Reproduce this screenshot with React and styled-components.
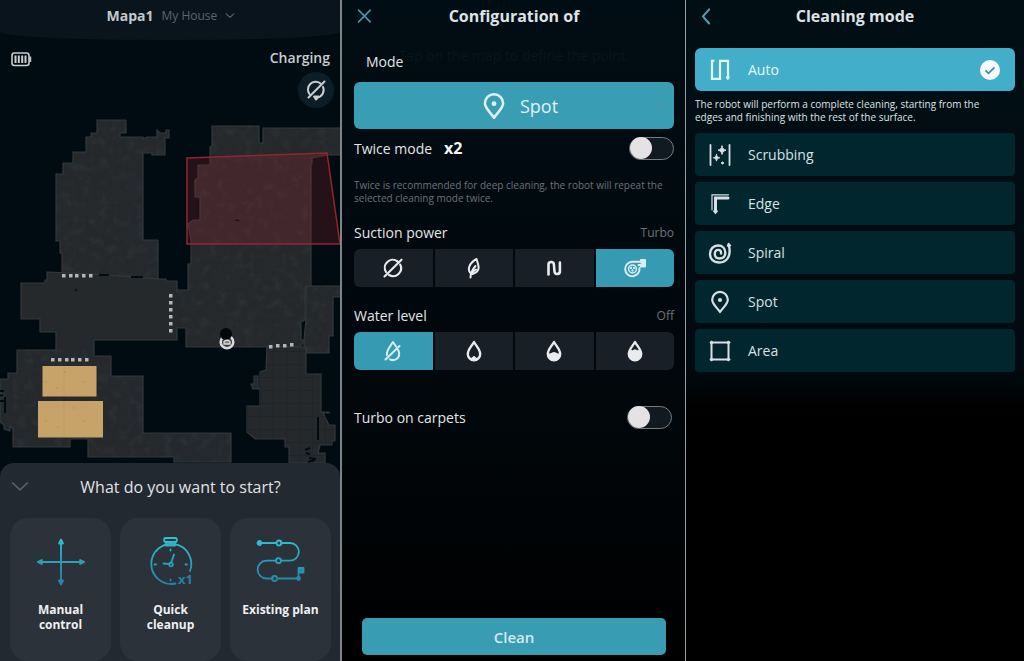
import React, { useState } from 'react';
import styled, { createGlobalStyle, css } from 'styled-components';

const GlobalStyle = createGlobalStyle`
  *, *::before, *::after {
    box-sizing: border-box;
  }
  body {
    margin: 0;
    background: #000;
    color: #e3e6e8;
    font-family: "Open Sans", "Noto Sans", sans-serif;
  }
  button, select, input {
    font-family: inherit;
    margin: 0;
  }
`;

const Screens = styled.main`
  display: grid;
  grid-template-columns: 342fr 344fr 338fr;
  min-height: 100vh;
`;

const Screen = styled.section`
  display: flex;
  flex-direction: column;
  min-width: 0;
  background: ${(p) => p.$background};
  border-right: ${(p) => p.$divider || 'none'};
`;

/* ---------- map screen ---------- */

const MapHeader = styled.header`
  display: flex;
  justify-content: center;
  align-items: center;
  gap: 8px;
  height: 40px;
  padding: 0 0 9px 2px;
  background: #0a141c;
  border-radius: 0 0 50% 50% / 0 0 8px 8px;
`;

const MapName = styled.label`
  font-size: 14px;
  font-weight: 700;
  color: #c4c8ca;
`;

const HousePicker = styled.span`
  display: flex;
  align-items: center;
  gap: 8px;
  color: #5c656a;
`;

const HouseSelect = styled.select`
  appearance: none;
  padding: 0;
  border: none;
  background: none;
  color: inherit;
  font-size: 12px;
`;

const MapArea = styled.div`
  display: grid;
  flex: 1;
`;

const FloorPlan = styled.svg`
  grid-area: 1 / 1;
  display: block;
  width: 100%;
  height: 100%;
`;

const StatusBar = styled.div`
  grid-area: 1 / 1;
  z-index: 1;
  display: flex;
  justify-content: space-between;
  align-items: flex-start;
  padding: 8px 6px 0 11px;
`;

const Battery = styled.svg`
  margin-top: 4px;
`;

const StatusSide = styled.div`
  display: flex;
  flex-direction: column;
  align-items: flex-end;
  gap: 5px;
`;

const StatusText = styled.span`
  padding-right: 4px;
  font-size: 14px;
  font-weight: 600;
  line-height: 19px;
  color: #c9cdcf;
`;

const RoundButton = styled.button`
  display: grid;
  place-items: center;
  width: 36px;
  height: 36px;
  padding: 0;
  border: none;
  border-radius: 50%;
  background: #0d1d28;
  color: #c9cdcf;
`;

const Sheet = styled.div`
  padding: 0 9px 0 10px;
  background: #222930;
  border-radius: 14px 14px 0 0;
`;

const SheetHeader = styled.div`
  display: grid;
  grid-template-columns: 20px 1fr;
  align-items: center;
  height: 55px;
  padding-bottom: 8px;
`;

const SheetTitle = styled.h2`
  margin: 0;
  text-align: center;
  font-size: 16px;
  font-weight: 400;
  color: #e0e3e5;
`;

const PlainButton = styled.button`
  display: grid;
  place-items: center;
  width: 20px;
  height: 20px;
  padding: 0;
  border: none;
  background: none;
  color: ${(p) => p.$color};
`;

const ActionCards = styled.div`
  display: grid;
  grid-template-columns: repeat(3, 1fr);
  gap: 9px;
`;

const ActionCard = styled.button`
  display: flex;
  flex-direction: column;
  align-items: center;
  gap: 16px;
  height: 143px;
  padding: 20px 6px 0;
  border: none;
  border-radius: 18px;
  background: #2b3239;
  color: #eef0f1;
  font-size: 12px;
  font-weight: 700;
  line-height: 15px;
`;

/* ---------- shared by the settings screens ---------- */

const TitleBar = styled.header`
  display: grid;
  grid-template-columns: 20px 1fr 20px;
  align-items: center;
  height: 32px;
  margin-bottom: ${(p) => p.$gap};
`;

const Title = styled.h1`
  margin: 0;
  text-align: center;
  font-size: 16px;
  font-weight: 700;
  color: #dfe3e5;
`;

const SettingsBody = styled.div`
  display: flex;
  flex-direction: column;
  flex: 1;
  padding: 0 11px 6px 12px;
`;

const ModeRow = styled.div`
  position: relative;
  height: 50px;
  padding: 20px 12px 0;
  font-size: 14px;
  line-height: 20px;
`;

const MapHint = styled.span`
  position: absolute;
  z-index: 0;
  top: 14px;
  left: 0;
  right: 0;
  text-align: center;
  font-size: 14px;
  color: #08151a;
`;

const ModeLabel = styled.span`
  position: relative;
`;

const ModeButton = styled.button`
  display: grid;
  grid-template-columns: 20px 1fr 10px;
  align-items: center;
  height: 47px;
  padding: 0 8px;
  border: none;
  border-radius: 6px;
  background: #399db3;
  color: #e0f1f5;
  font-size: 18px;
`;

const ModeValue = styled.span`
  display: flex;
  grid-column: 2;
  justify-content: center;
  align-items: center;
  gap: 12px;
`;

const Faded = styled.span`
  display: flex;
  color: #5a93a2;
`;

const SwitchRow = styled.div`
  display: flex;
  align-items: center;
  gap: 12px;
  height: 38px;
  font-size: 14px;
`;

const Times = styled.strong`
  flex: 1;
  font-size: 16px;
  color: #f1f3f4;
`;

const Switch = styled.input`
  appearance: none;
  display: flex;
  align-items: center;
  width: 45px;
  height: 23px;
  margin-left: auto;
  border: 1px solid #777c80;
  border-radius: 12px;
  background: #111a20;

  &::before {
    content: '';
    width: 22px;
    height: 22px;
    border-radius: 50%;
    background: #e4e2e5;
  }
  &:checked {
    justify-content: flex-end;
    background: #399db3;
  }
`;

const Note = styled.p`
  margin: 0;
  padding: ${(p) => p.$padding};
  font-size: 10px;
  font-weight: 500;
  line-height: 13px;
  color: ${(p) => p.$color};
`;

const FieldGroup = styled.fieldset`
  min-width: 0;
  margin: 0 0 17px;
  padding: 0;
  border: none;
`;

const FieldHeader = styled.div`
  display: flex;
  justify-content: space-between;
  align-items: center;
  height: 28px;
  padding-bottom: 6px;
  font-size: 14px;
`;

const FieldValue = styled.span`
  font-size: 12px;
  color: #6c7378;
`;

const Segments = styled.div`
  display: grid;
  grid-template-columns: repeat(4, 1fr);
  gap: 2px;
  border-radius: 6px;
  overflow: hidden;
`;

const Segment = styled.label`
  display: grid;
  place-items: center;
  height: 38px;
  background: ${(p) => (p.$active ? '#369bb2' : '#191f27')};
  color: ${(p) => (p.$active ? '#d9eef3' : '#e9ecee')};
`;

const HiddenRadio = styled.input`
  position: absolute;
  opacity: 0;
  pointer-events: none;
`;

const Extras = styled.div`
  padding: 11px 2px 0 0;
`;

const CleanButton = styled.button`
  height: 37px;
  margin: auto 8px 0;
  border: none;
  border-radius: 5px;
  background: #389cb2;
  color: #d5eaf0;
  font-size: 15px;
  font-weight: 600;
`;

const ModeList = styled.div`
  display: flex;
  flex-direction: column;
  padding: 0 9px;
`;

const ModeItem = styled.label`
  display: flex;
  align-items: center;
  gap: 16px;
  height: 43px;
  margin-bottom: 6px;
  padding: 0 15px 0 13px;
  border-radius: 4px;
  background: #02262e;
  color: #d5e1e4;
  font-size: 14px;

  ${(p) =>
    p.$active &&
    css`
      border-radius: 6px;
      background: #42aec9;
      color: #e6f7fb;
    `}
`;

const Check = styled.svg`
  margin-left: auto;
`;

/* ---------- icons ---------- */

const Icon = ({ size = 24, children, width = 2 }) => (
  <svg
    width={size}
    height={size}
    viewBox="0 0 24 24"
    fill="none"
    stroke="currentColor"
    strokeWidth={width}
    strokeLinecap="round"
    strokeLinejoin="round"
    aria-hidden="true"
  >
    {children}
  </svg>
);

const CloseIcon = () => (
  <Icon size={20} width={2}>
    <path d="M5.500 5l14 14M19.500 5L5.500 19" />
  </Icon>
);

const BackIcon = () => (
  <Icon size={20} width={2.4}>
    <path d="M17 4L9.500 12.500l7.500 8.500" />
  </Icon>
);

const ChevronDown = ({ size = 20, width = 1.8 }) => (
  <Icon size={size} width={width}>
    <path d="M3 7l9 8.500L21 7" />
  </Icon>
);

const ChevronRight = () => (
  <Icon size={10} width={3}>
    <path d="M7 4l8 8-8 8" />
  </Icon>
);

const OffIcon = () => (
  <Icon width={2.100}>
    <path d="M5 16A8 8 0 0 1 16.500 5.300M8 19A8 8 0 0 0 19.200 8.500M3.500 20.500L20.500 3.700" />
  </Icon>
);

const RechargeOffIcon = () => (
  <Icon>
    <path d="M5.400 16A7.700 7.700 0 0 1 16.200 5.300M13 19.500A7.700 7.700 0 0 0 19 8.800M4.500 19.500L20.500 3.500" />
    <path d="M10 18.500h4.500L12 21.500z" fill="currentColor" />
  </Icon>
);

const LeafIcon = () => (
  <Icon>
    <path d="M9.500 18C4.500 14.500 7 7 14.500 3c1.500 5.500 5.500 12-4 15M8.500 21.500c0-4 1.500-7.500 5-11.500M10 16.500l4-3" />
  </Icon>
);

const WaveIcon = () => (
  <Icon width={2.600}>
    <path d="M6.500 18.500V9a2.700 2.700 0 0 1 5.400-.5l.6 7a2.700 2.700 0 0 0 5.400-.5V6.500" />
  </Icon>
);

const TurboIcon = () => (
  <Icon width={2}>
    <path d="M16.500 12a7.200 7.200 0 1 1-7.200-6.200H18V4h4v6.500h-4V9h-2.500" />
    <path d="M18.500 4.500h3v5.500h-3z" fill="currentColor" strokeWidth="1" />
    <circle cx="9.500" cy="13" r="3.900" strokeWidth="1.500" />
    <circle cx="8" cy="12" r="0.500" strokeWidth="1.300" />
    <circle cx="11" cy="12" r="0.500" strokeWidth="1.300" />
    <circle cx="9.500" cy="14.500" r="0.500" strokeWidth="1.300" />
  </Icon>
);

const dropShape = 'M12 3C10 6.800 5.800 10.500 5.800 15a6.200 6.200 0 0 0 12.400 0c0-4.500-4.200-8.200-6.200-12z';

const DropOffIcon = () => (
  <Icon width={2}>
    <path d="M5.900 16C5.200 11.500 9.500 7 12 3l3 4.500M9 20.300A6.200 6.200 0 0 0 18.200 15c0-1.300-.4-2.700-1-4M4.500 20.500L18.500 7" />
  </Icon>
);

const waterFills = {
  low: 'M6.500 17.500q2.500 2.500 4 .5t3 0 4-.5c-1 5-10 5-11 0z',
  medium: 'M5.500 13.500q2 2 4.300.3t4.400 0 4.300-.3c0 9.500-13 9.500-13 0z',
  high: 'M7.500 10.500q1.500 1.500 3 .3t3 0 3-.3c6.500 13-15.500 13-9 0z',
};

const DropIcon = ({ level }) => (
  <Icon width={2.400}>
    <path d={dropShape} />
    <path d={waterFills[level]} fill="currentColor" stroke="none" />
  </Icon>
);

const SpotIcon = ({ size = 24 }) => (
  <Icon size={size} width={2.200}>
    <path d="M12 22C9 17.500 4.200 14 4.200 9.700a7.800 7.800 0 0 1 15.600 0C19.800 14 15 17.500 12 22z" />
    <circle cx="12" cy="10" r="1" fill="currentColor" />
  </Icon>
);

const AutoIcon = () => (
  <Icon width={2.200}>
    <path d="M5.500 2.800H4v18h8v-18h8v15" strokeLinejoin="miter" />
    <path d="M18.500 19h3L20 21.500z" fill="currentColor" strokeWidth="1" />
  </Icon>
);

const ScrubbingIcon = () => (
  <Icon>
    <path d="M2.500 2v20M21.500 2v20" strokeWidth="1.800" />
    <path
      d="M14 3c.6 2.600 1.500 3.500 4 4.200-2.500.7-3.400 1.600-4 4.200-.6-2.600-1.500-3.500-4-4.200 2.500-.7 3.400-1.600 4-4.200zM8.500 11.500c.4 2 1.200 2.800 3.200 3.300-2 .5-2.800 1.300-3.200 3.300-.4-2-1.200-2.800-3.200-3.300 2-.5 2.800-1.300 3.200-3.300z"
      fill="currentColor"
      strokeWidth="1"
    />
    <circle cx="14.500" cy="20" r="1" fill="currentColor" strokeWidth="1" />
  </Icon>
);

const EdgeIcon = () => (
  <Icon>
    <path d="M20.500 2.800H4v15" strokeLinejoin="miter" strokeWidth="1.200" />
    <path d="M20 6H7.500v13" strokeLinejoin="miter" strokeWidth="3" />
    <path d="M5.500 19h4l-2 2.500z" fill="currentColor" strokeWidth="1.200" />
  </Icon>
);

const SpiralIcon = () => (
  <Icon width={2.400}>
    <path d="M21 5c2 8.500-1 16.500-10 16.500-5.500 0-9-3.500-9-8.500s3.500-8.500 8-8.500 7.300 3 7.300 7-2.500 6-5.800 6S6.800 15.400 6.800 12.800s1.500-3.900 3.500-3.900 3 1.300 2.700 3.600" />
    <path d="M19.500 5L20.500 2.500l2 2z" fill="currentColor" strokeWidth="1.500" />
  </Icon>
);

const AreaIcon = () => (
  <Icon width={2}>
    <rect x="3.500" y="3.500" width="17" height="17" />
    {[[3.5, 3.5], [20.5, 3.5], [3.5, 20.5], [20.5, 20.5]].map(([x, y]) => (
      <circle key={`${x}-${y}`} cx={x} cy={y} r="1.300" fill="currentColor" strokeWidth="1" />
    ))}
  </Icon>
);

const CardIcon = ({ id, children }) => (
  <svg
    width="48"
    height="48"
    viewBox="0 0 48 48"
    overflow="visible"
    fill="none"
    stroke={`url(#${id})`}
    strokeWidth="1.800"
    strokeLinecap="round"
    strokeLinejoin="round"
    aria-hidden="true"
  >
    <defs>
      <linearGradient id={id} x1="0" y1="0" x2="0" y2="48" gradientUnits="userSpaceOnUse">
        <stop offset="0" stopColor="#2fc0d2" />
        <stop offset="1" stopColor="#2480a8" />
      </linearGradient>
    </defs>
    {children}
  </svg>
);

const ManualIcon = () => (
  <CardIcon id="manual">
    <path d="M24 4v40M3 24h42" />
    <path
      d="M24 1.500l2 4h-4zM24 46.500l2-4h-4zM.8 24l4-2v4zM47.200 24l-4-2v4z"
      fill="url(#manual)"
    />
  </CardIcon>
);

const QuickIcon = () => (
  <CardIcon id="quick">
    <path d="M18 0h11q2 2 0 4h-11q-2-2 0-4zM19 4v3.500M28 4v3.500M19 7.500h9" />
    <path d="M28.500 45.500A20 20 0 1 1 43 33" />
    <path d="M23.500 11.500v1M23.500 41.500v1M7.500 26.500h1.500M38.500 26.500h1.500M24 25l3-8.500M22 26l-5.500-.5" />
    <circle cx="24" cy="26.500" r="1.800" />
    <text x="31" y="46" fontSize="13" fill="#2480a8" stroke="none">
      x1
    </text>
  </CardIcon>
);

const PlanIcon = () => (
  <CardIcon id="plan">
    <path d="M3 5h16M24 5h9a8.700 8.700 0 0 1 0 17.700h-9M19 22.700H9.500a8.900 8.900 0 0 0 0 17.800H16M21 40.500h18M41.500 40V30h5v4.500h-5" />
    <circle cx="22" cy="5" r="2.500" />
    <circle cx="21.500" cy="22.700" r="2.500" />
    <circle cx="17.500" cy="40.500" r="2.500" />
    <circle cx="2.500" cy="5" r="2" fill="#2fc0d2" />
    <circle cx="41.500" cy="40.500" r="1.500" fill="#2480a8" />
    <path d="M42 30.500h4v3.500h-4z" fill="#2480a8" />
  </CardIcon>
);

/* ---------- floor plan ---------- */

const rooms = [
  // bedroom, top left
  'M97 120H126V133H120V137H143V139L147 137H157V130L160 133H166V130H169V138H165V155H152V153H143V240H158V279L94 275H62V253H60V241H56V174H63V163H73V152H86V137H91V133H97Z',
  // living room
  'M212 126H259V143H263V128H342V155H327L312 158V163H311V287L305 288V320L301 322V340H305L300 347H186V328H176V290H188V264H191V240L188 224L193 220H200V197H195V180L198 178V165H210V147L212 146Z',
  // corridor and lower left room
  'M47 272L94 274L158 279H166V281H177V290V340H94V356H111V376H143V433H231V462H174V457H88V439H70V447H13V429L10 426V431L4 429V425L0 422V397H4V394H0V379H8V373H17V350H56V332H40V319H21V283H45V280H47Z',
  // right room
  'M306 286H342V297H333V336H329V353H304V340L306 320Z',
];

const kitchen =
  'M267 347H306V374H321V412H329V413H323L329 425H335V441H332V445H320L318 453H325V463H289V447H285V439H255L247 432V406H260V389H253L251 384H254V376H258V388L260 389V372L266 370Z';

const dots = [
  ...[64, 71, 77, 84, 91].map((x) => [x, 276]),
  ...[296, 303, 310, 317, 324, 331].map((y) => [171, y]),
  ...[53, 60, 67, 73, 80, 87].map((x) => [x, 360]),
  [271, 347],
  [278, 346],
  [285, 346],
  [292, 345],
];

const HouseMap = () => (
  <FloorPlan viewBox="0 40 340 423" preserveAspectRatio="xMidYMid slice" role="img" aria-label="Floor plan">
    <defs>
      <filter id="grain" x="0" y="0" width="100%" height="100%">
        <feTurbulence type="fractalNoise" baseFrequency="0.11" numOctaves="3" seed="4" />
        <feColorMatrix values="0 0 0 0 0.06  0 0 0 0 0.07  0 0 0 0 0.08  2.500 0 0 0 -1.200" />
        <feComposite in2="SourceGraphic" operator="in" />
      </filter>
      <pattern id="tiles" width="13" height="13" patternUnits="userSpaceOnUse">
        <path d="M0 0H13M0 0V13" stroke="#1f2325" strokeWidth="1.500" />
      </pattern>
    </defs>
    <g fill="#25292c" stroke="#33393b" strokeWidth="1.200">
      {rooms.map((d) => (
        <path key={d} d={d} />
      ))}
      <path d={kitchen} />
    </g>
    <path d={kitchen} fill="url(#tiles)" />
    <g filter="url(#grain)" opacity="0.240">
      {rooms.filter((_, i) => i !== 2).map((d) => (
        <path key={d} d={d} />
      ))}
      <path d="M17 350H94V356H111V376H143V433H231V462H174V457H88V439H70V447H13V373H17Z" />
    </g>
    <path d="M171 292H179V327H171Z" fill="#25292c" />
    <path d="M99 275H109M131 277H143M303 322V335M318 417V440" stroke="#020b10" strokeWidth="2" />
    <path d="M305 450l5-2M306 453l4 1M309 458l7 1M308 462l7-2M0 391h4M0 401h5M5 397v16" stroke="#020b10" strokeWidth="2" />
    <circle cx="76" cy="290" r="1.500" fill="#111517" />
    <path d="M187 158L327 153L340 244H187Z" fill="#b0282d" fillOpacity="0.210" stroke="#98222f" strokeWidth="1.500" />
    <path d="M234 221l3-2 3 2z" fill="#1c0f12" />
    <g fill="#c7a369">
      <path d="M42.500 366H96.500V396.500H42.500ZM38 401H103V437.500H38Z" />
    </g>
    <path d="M64 366V396M64 401V437" stroke="#bf9b61" />
    <g fill="#b08b52" opacity="0.500">
      <circle cx="46" cy="382" r="1" />
      <circle cx="84" cy="382" r="1" />
      <circle cx="57" cy="388" r="1" />
      <circle cx="65" cy="372" r="1" />
      <circle cx="46" cy="421" r="1" />
      <circle cx="84" cy="421" r="1" />
      <circle cx="58" cy="427" r="1" />
      <circle cx="74" cy="408" r="1" />
    </g>
    <g fill="#b4b7b7">
      {dots.map(([x, y]) => (
        <rect key={`${x}-${y}`} x={x - 2} y={y - 2} width="3.500" height="3.500" />
      ))}
    </g>
    <circle cx="227" cy="342" r="6.300" fill="#3a3f42" stroke="#d9dbdb" strokeWidth="2.500" />
    <circle cx="226" cy="334" r="6" fill="#050607" />
    <path d="M224 344V341.500q3-2.500 6 0V344Z" fill="#7b8082" stroke="#d9dbdb" strokeWidth="1.300" />
  </FloorPlan>
);

const suctionLevels = [
  { name: 'Off', icon: <OffIcon /> },
  { name: 'Eco', icon: <LeafIcon /> },
  { name: 'Normal', icon: <WaveIcon /> },
  { name: 'Turbo', icon: <TurboIcon /> },
];

const waterLevels = [
  { name: 'Off', icon: <DropOffIcon /> },
  { name: 'Low', icon: <DropIcon level="low" /> },
  { name: 'Medium', icon: <DropIcon level="medium" /> },
  { name: 'High', icon: <DropIcon level="high" /> },
];

const cleaningModes = [
  {
    name: 'Auto',
    icon: <AutoIcon />,
    note: 'The robot will perform a complete cleaning, starting from the edges and finishing with the rest of the surface.',
  },
  { name: 'Scrubbing', icon: <ScrubbingIcon /> },
  { name: 'Edge', icon: <EdgeIcon /> },
  { name: 'Spiral', icon: <SpiralIcon /> },
  { name: 'Spot', icon: <SpotIcon /> },
  { name: 'Area', icon: <AreaIcon /> },
];

const LevelField = ({ label, name, levels, initial }) => {
  const [value, setValue] = useState(initial);

  return (
    <FieldGroup aria-label={label}>
      <FieldHeader>
        <span>{label}</span>
        <FieldValue>{value}</FieldValue>
      </FieldHeader>
      <Segments>
        {levels.map((level) => (
          <Segment key={level.name} $active={level.name === value}>
            <HiddenRadio
              type="radio"
              name={name}
              aria-label={level.name}
              checked={level.name === value}
              onChange={() => setValue(level.name)}
            />
            {level.icon}
          </Segment>
        ))}
      </Segments>
    </FieldGroup>
  );
};

const MapScreen = () => (
  <Screen $background="#010c12" $divider="2px solid #7d8587">
    <MapHeader>
      <MapName htmlFor="house">Mapa1</MapName>
      <HousePicker>
        <HouseSelect id="house">
          <option>My House</option>
        </HouseSelect>
        <ChevronDown size={10} width={2.500} />
      </HousePicker>
    </MapHeader>
    <MapArea>
      <HouseMap />
      <StatusBar>
        <Battery width="21" height="15" viewBox="0 0 21 15" fill="none" stroke="#c9cdcf" role="img" aria-label="Battery full">
          <rect x="1" y="1" width="17" height="12.500" rx="2.500" strokeWidth="1.600" />
          <path d="M19.300 4.500v5.500" strokeWidth="1.800" />
          <path d="M4.500 3.500v7.500M7.800 3.500v7.500M11.200 3.500v7.500M14.500 3.500v7.500" strokeWidth="2" />
        </Battery>
        <StatusSide>
          <StatusText>Charging</StatusText>
          <RoundButton aria-label="Stop charging">
            <RechargeOffIcon />
          </RoundButton>
        </StatusSide>
      </StatusBar>
    </MapArea>
    <Sheet>
      <SheetHeader>
        <PlainButton $color="#566069" aria-label="Collapse">
          <ChevronDown />
        </PlainButton>
        <SheetTitle>What do you want to start?</SheetTitle>
      </SheetHeader>
      <ActionCards>
        <ActionCard>
          <ManualIcon />
          <span>
            Manual
            <br />
            control
          </span>
        </ActionCard>
        <ActionCard>
          <QuickIcon />
          <span>
            Quick
            <br />
            cleanup
          </span>
        </ActionCard>
        <ActionCard>
          <PlanIcon />
          <span>Existing plan</span>
        </ActionCard>
      </ActionCards>
    </Sheet>
  </Screen>
);

const ConfigScreen = () => {
  const [twice, setTwice] = useState(false);
  const [carpets, setCarpets] = useState(false);

  return (
    <Screen $background="linear-gradient(#010d14, #01070b 60%, #000)" $divider="1px solid #96a0a2">
      <SettingsBody>
        <TitleBar $gap="0">
          <PlainButton $color="#4598ab" aria-label="Close">
            <CloseIcon />
          </PlainButton>
          <Title>Configuration of</Title>
        </TitleBar>
        <ModeRow>
          <MapHint aria-hidden="true">Tap on the map to define the point.</MapHint>
          <ModeLabel>Mode</ModeLabel>
        </ModeRow>
        <ModeButton>
          <ModeValue>
            <SpotIcon size={28} />
            Spot
          </ModeValue>
          <Faded>
            <ChevronRight />
          </Faded>
        </ModeButton>
        <SwitchRow>
          <label htmlFor="twice">Twice mode</label>
          <Times>x2</Times>
          <Switch id="twice" type="checkbox" checked={twice} onChange={(e) => setTwice(e.target.checked)} />
        </SwitchRow>
        <Note $color="#6b7378" $padding="12px 0 16px">
          Twice is recommended for deep cleaning, the robot will repeat the selected cleaning mode twice.
        </Note>
        <LevelField label="Suction power" name="suction" levels={suctionLevels} initial="Turbo" />
        <LevelField label="Water level" name="water" levels={waterLevels} initial="Off" />
        <Extras>
          <SwitchRow>
            <label htmlFor="carpets">Turbo on carpets</label>
            <Switch id="carpets" type="checkbox" checked={carpets} onChange={(e) => setCarpets(e.target.checked)} />
          </SwitchRow>
        </Extras>
        <CleanButton>Clean</CleanButton>
      </SettingsBody>
    </Screen>
  );
};

const ModeScreen = () => {
  const [mode, setMode] = useState('Auto');

  return (
    <Screen $background="linear-gradient(#010f15, #010a10 56%, #000 62%)">
      <ModeList role="radiogroup" aria-label="Cleaning mode">
        <TitleBar $gap="16px">
          <PlainButton $color="#4ba3ba" aria-label="Back">
            <BackIcon />
          </PlainButton>
          <Title>Cleaning mode</Title>
        </TitleBar>
        {cleaningModes.map((item) => (
          <React.Fragment key={item.name}>
            <ModeItem $active={item.name === mode}>
              <HiddenRadio
                type="radio"
                name="mode"
                checked={item.name === mode}
                onChange={() => setMode(item.name)}
              />
              {item.icon}
              {item.name}
              {item.name === mode && (
                <Check width="20" height="20" viewBox="0 0 20 20" aria-hidden="true">
                  <circle cx="10" cy="10" r="10" fill="#f6fcfe" />
                  <path d="M5.500 10.300l3 3 6-6" fill="none" stroke="#3f8ea6" strokeWidth="1.800" />
                </Check>
              )}
            </ModeItem>
            {item.note && (
              <Note $color="#dfe4e6" $padding="1px 16px 9px 0">
                {item.note}
              </Note>
            )}
          </React.Fragment>
        ))}
      </ModeList>
    </Screen>
  );
};

const App = () => (
  <>
    <GlobalStyle />
    <Screens>
      <MapScreen />
      <ConfigScreen />
      <ModeScreen />
    </Screens>
  </>
);

export default App;
